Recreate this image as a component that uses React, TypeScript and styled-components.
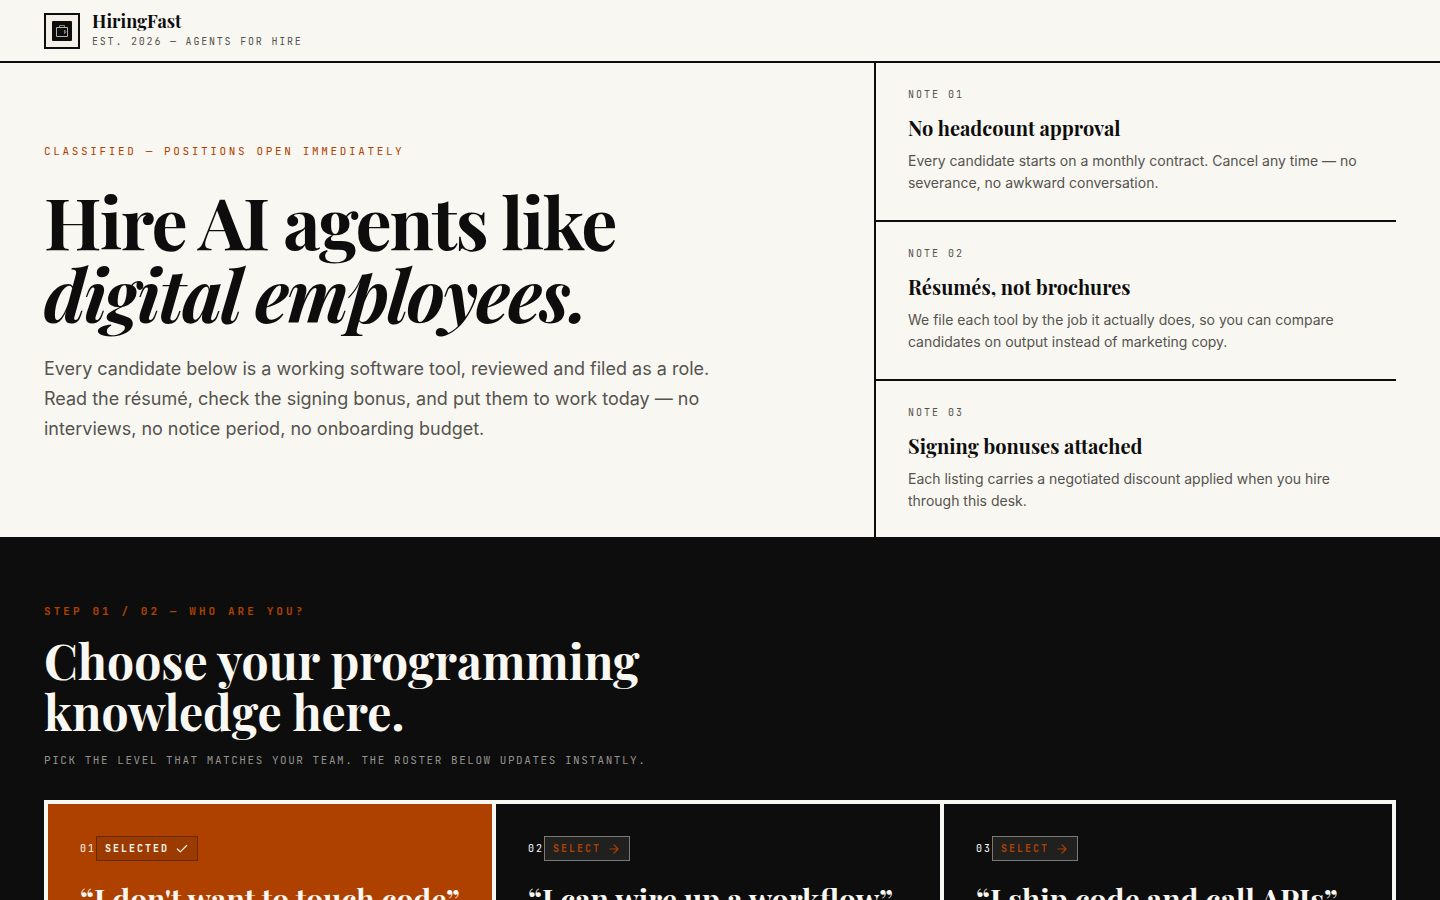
import React, { useState } from "react";
import styled, { createGlobalStyle } from "styled-components";

const ink = "#0d0d0d";
const paper = "#f9f7f2";
const rust = "#ae4100";
const muted = "#55534e";

const display = `"Playfair Display", "Liberation Serif", serif`;
const mono = `"JetBrains Mono", "Liberation Mono", monospace`;

const GlobalStyle = createGlobalStyle`
  *, *::before, *::after { box-sizing: border-box; }
  body { margin: 0; background: ${paper}; color: ${ink}; font-family: Inter, sans-serif; }
  h1, h2, h3, p { margin: 0; }
`;

const Header = styled.header`
  display: flex;
  align-items: center;
  gap: 12px;
  padding: 12px 44px;
  border-bottom: 2px solid ${ink};
`;

const LogoBox = styled.a`
  display: flex;
  align-items: center;
  justify-content: center;
  width: 36px;
  height: 36px;
  border: 2px solid ${ink};
  background: #f4efe9;
`;

const Brand = styled.div`
  display: flex;
  flex-direction: column;
  gap: 5px;
`;

const BrandName = styled.span`
  font: 700 18px/18px ${display};
`;

const Label = styled.p<{ $size?: number; $line?: number; $track: string; $color?: string; $bold?: boolean }>`
  font-family: ${mono};
  font-size: ${(p) => p.$size ?? 10}px;
  line-height: ${(p) => p.$line ?? 16}px;
  font-weight: ${(p) => (p.$bold ? 700 : 400)};
  letter-spacing: ${(p) => p.$track};
  text-transform: uppercase;
  color: ${(p) => p.$color ?? muted};
`;

const Hero = styled.section`
  display: grid;
  grid-template-columns: minmax(0, 1.59fr) minmax(0, 1fr);
  padding: 0 44px;
  border-bottom: 2px solid ${ink};
`;

const Pitch = styled.div`
  display: flex;
  flex-direction: column;
  justify-content: center;
  padding: 0 44px 14px 0;
`;

const Headline = styled.h1`
  margin: 25px 0 24px;
  font: 700 72px/73px ${display};
  letter-spacing: -0.025em;
`;

const Lede = styled.p`
  max-width: 680px;
  font-size: 18px;
  line-height: 1.65;
  color: ${muted};
`;

const Notes = styled.aside`
  border-left: 2px solid ${ink};
`;

const Note = styled.article`
  padding: 24px 32px 25px;
  & + & { border-top: 2px solid ${ink}; }
`;

const NoteTitle = styled.h3`
  margin: 11px 0 8px;
  font: 700 20px/28px ${display};
`;

const NoteText = styled.p`
  font-size: 14px;
  line-height: 1.6;
  color: ${muted};
`;

const Chooser = styled.section`
  padding: 64px 44px;
  background: ${ink};
  color: ${paper};
`;

const ChooserTitle = styled.h2`
  max-width: 700px;
  margin: 16px 0;
  font: 700 48px/1.05 ${display};
`;

const Levels = styled.div`
  display: grid;
  grid-template-columns: repeat(3, minmax(0, 1fr));
  margin-top: 32px;
  border: 4px solid ${paper};
`;

const Level = styled.button<{ $on: boolean }>`
  padding: 32px;
  border: 0;
  background: ${(p) => (p.$on ? rust : ink)};
  color: ${paper};
  text-align: left;
  cursor: pointer;
  &:not(:last-child) { border-right: 4px solid ${paper}; }
`;

const LevelTop = styled.span`
  display: flex;
  align-items: center;
`;

const LevelNumber = styled.span`
  font: 400 10px/16px ${mono};
  letter-spacing: 0.2em;
`;

const Tag = styled.span<{ $on: boolean }>`
  display: inline-flex;
  align-items: center;
  gap: 6px;
  padding: 4px 8px;
  border: 1px solid ${(p) => (p.$on ? "#652906" : "#7a7977")};
  background: ${(p) => (p.$on ? "#9c3b01" : "#20201e")};
  color: ${(p) => (p.$on ? paper : rust)};
  font: 700 10px/15px ${mono};
  letter-spacing: 0.2em;
`;

const LevelTitle = styled.span`
  display: block;
  margin-top: 20px;
  font: 700 30px/36px ${display};
  white-space: nowrap;
`;

const Briefcase = () => (
  <svg width="20" height="20" viewBox="0 0 20 20" fill="none" aria-hidden="true">
    <rect width="20" height="20" rx="1" fill={ink} />
    <path d="M7.500 6V4.500h5V6" stroke="#8f8e8a" />
    <path d="M4.500 6.500h11v9h-11z" stroke="#b4b2ae" />
    <path d="M12.500 9v3.500l1.500-1.750z" stroke="#b4b2ae" strokeWidth="0.700" />
  </svg>
);

const TagIcon = ({ on }: { on: boolean }) => (
  <svg width="14" height="14" viewBox="0 0 24 24" fill="none" stroke="currentColor" strokeWidth="2" strokeLinecap="round" strokeLinejoin="round" aria-hidden="true">
    {on ? <path d="M20 6 9 17l-5-5" /> : <path d="M5 12h14M12 5l7 7-7 7" />}
  </svg>
);

const notes = [
  { title: "No headcount approval", text: "Every candidate starts on a monthly contract. Cancel any time — no severance, no awkward conversation." },
  { title: "Résumés, not brochures", text: "We file each tool by the job it actually does, so you can compare candidates on output instead of marketing copy." },
  { title: "Signing bonuses attached", text: "Each listing carries a negotiated discount applied when you hire through this desk." },
];

const levels = ["“I don't want to touch code”", "“I can wire up a workflow”", "“I ship code and call APIs”"];

export default function App() {
  const [chosen, setChosen] = useState(0);
  return (
    <>
      <GlobalStyle />
      <Header>
        <LogoBox href="#" aria-label="HiringFast home"><Briefcase /></LogoBox>
        <Brand>
          <BrandName>HiringFast</BrandName>
          <Label $line={14} $track="0.18em">Est. 2026 — Agents for hire</Label>
        </Brand>
      </Header>
      <main>
        <Hero>
          <Pitch>
            <Label $size={11} $track="0.24em" $color={rust}>Classified — Positions open immediately</Label>
            <Headline>Hire AI agents like<br /><em>digital employees.</em></Headline>
            <Lede>
              Every candidate below is a working software tool, reviewed and filed as a role. Read the résumé, check the signing bonus, and put them to work today — no interviews, no notice period, no onboarding budget.
            </Lede>
          </Pitch>
          <Notes>
            {notes.map((note, i) => (
              <Note key={note.title}>
                <Label $track="0.2em">Note 0{i + 1}</Label>
                <NoteTitle>{note.title}</NoteTitle>
                <NoteText>{note.text}</NoteText>
              </Note>
            ))}
          </Notes>
        </Hero>
        <Chooser>
          <Label $size={11} $track="0.28em" $color={rust} $bold>Step 01 / 02 — Who are you?</Label>
          <ChooserTitle>Choose your programming knowledge here.</ChooserTitle>
          <Label $size={11} $track="0.14em" $color="#93928e">Pick the level that matches your team. The roster below updates instantly.</Label>
          <Levels>
            {levels.map((title, i) => (
              <Level key={title} type="button" $on={i === chosen} aria-pressed={i === chosen} onClick={() => setChosen(i)}>
                <LevelTop>
                  <LevelNumber>0{i + 1}</LevelNumber>
                  <Tag $on={i === chosen}>
                    {i === chosen ? "SELECTED" : "SELECT"}
                    <TagIcon on={i === chosen} />
                  </Tag>
                </LevelTop>
                <LevelTitle>{title}</LevelTitle>
              </Level>
            ))}
          </Levels>
        </Chooser>
      </main>
    </>
  );
}
